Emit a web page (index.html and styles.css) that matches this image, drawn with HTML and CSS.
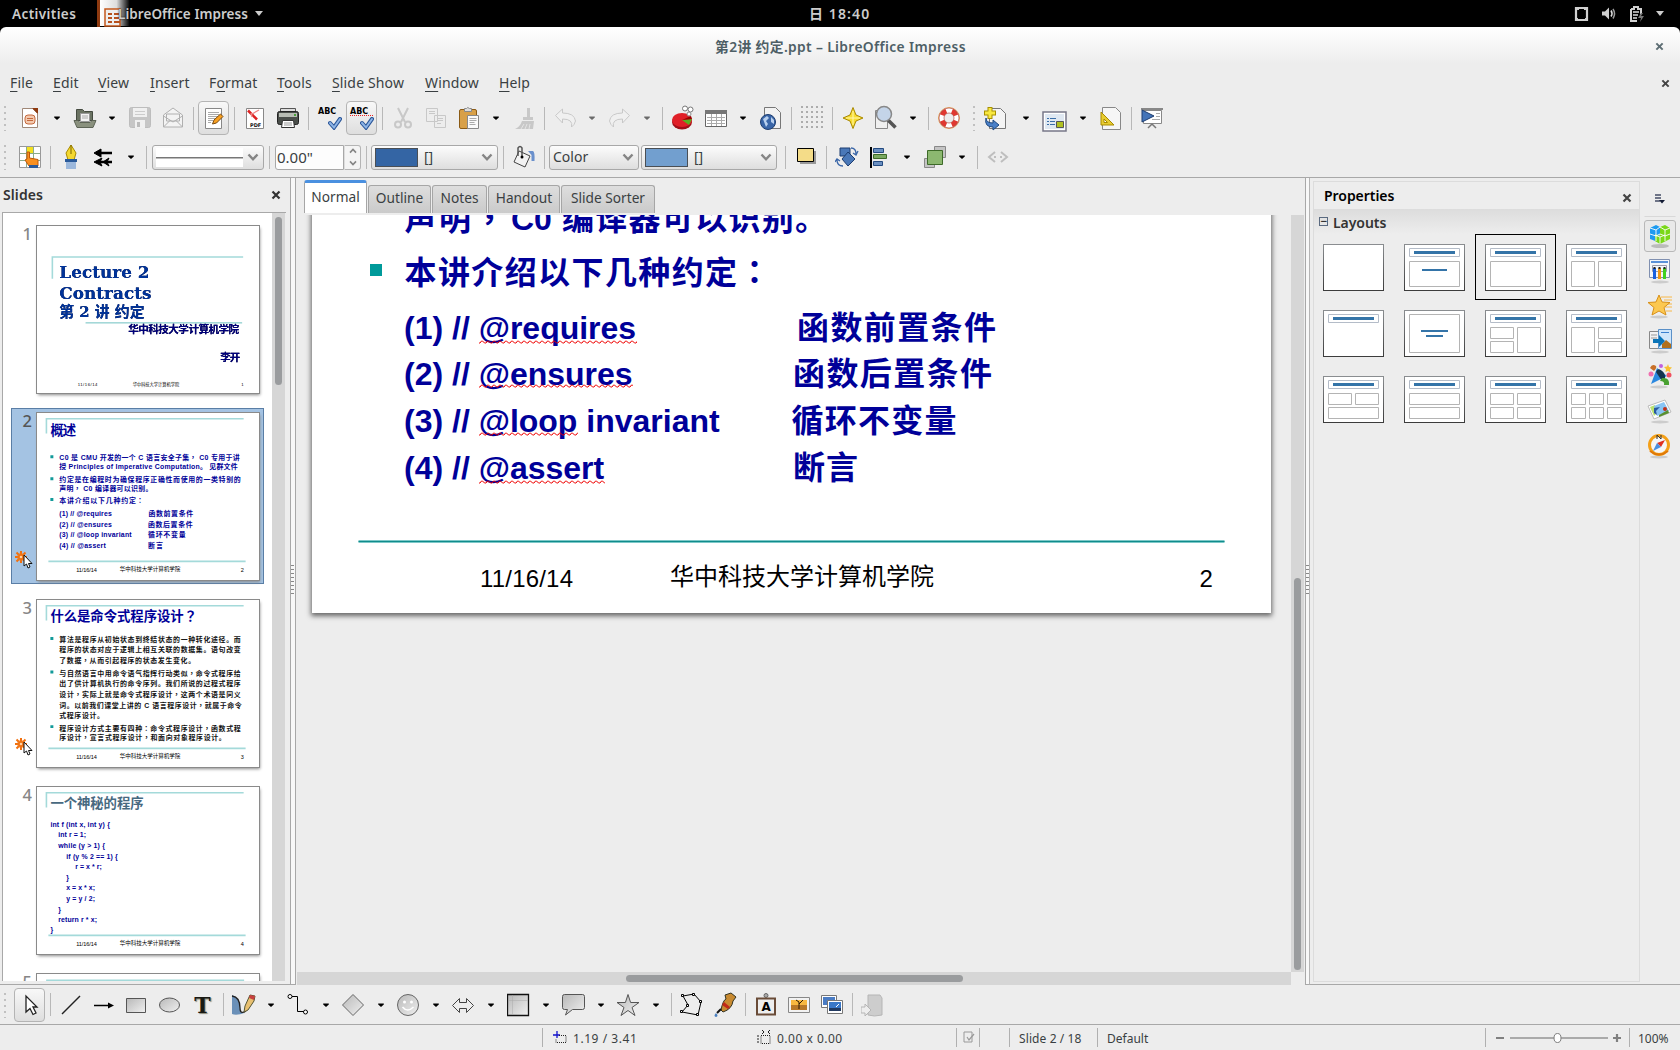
FILE: index.html
```html
<!DOCTYPE html>
<html>
<head>
<meta charset="utf-8">
<title>第2讲 约定.ppt – LibreOffice Impress</title>
<link rel="stylesheet" href="styles.css">
</head>
<body>
<svg class="defs" width="0" height="0">
  <defs>
    <linearGradient id="grey" x1="0" y1="0" x2="1" y2="1"><stop offset="0" stop-color="#b8b8b8"/><stop offset="1" stop-color="#f0f0f0"/></linearGradient>
    <linearGradient id="fade" x1="0" y1="0" x2="1" y2="0"><stop offset="0" stop-color="#fff"/><stop offset=".5" stop-color="#ddd"/><stop offset=".9" stop-color="#000"/></linearGradient>
    <linearGradient id="frame" x1="0" y1="0" x2="0" y2="1"><stop offset="0" stop-color="#8a8d90"/><stop offset="1" stop-color="#3c3c3c"/></linearGradient>
    <pattern id="squig" width="6" height="4" patternUnits="userSpaceOnUse"><path d="M0 3L1.500 1H2.500L4.500 3H6" fill="none" stroke="#e00" stroke-width="1"/></pattern>
    <symbol id="dd" viewBox="0 0 8 8"><path d="M1.200 2.500h5.600v1l-2.800 2.600-2.800-2.600z"/></symbol>
    <symbol id="x" viewBox="0 0 10 10"><path d="M1.500 1.500l7 7M8.500 1.500l-7 7" stroke="currentColor" stroke-width="2.200"/></symbol>
    <symbol id="chev" viewBox="0 0 12 12"><path d="M1.500 3.500L6 8.300l4.500-4.800" fill="none" stroke="#858585" stroke-width="2.400"/></symbol>
    <symbol id="anim" viewBox="0 0 18 18"><path d="M6 0v12M0 6h12M1.500 1.500l9 9M10.500 1.500l-9 9" stroke="#f07010" stroke-width="2"/><circle cx="6" cy="6" r="3.500" fill="none" stroke="#f07818" stroke-width=".8"/><circle cx="6" cy="6" r="1.300" fill="#ffd0a0"/><path d="M9 4v11l2.500-2 1.500 4 2-1-1.500-3.500H17z" fill="#fff" stroke="#111"/></symbol>
    <symbol id="check" viewBox="0 0 14 13"><path d="M2 6l4 4.500L12 2" fill="none" stroke="#2a5699" stroke-width="4" stroke-linecap="round"/><path d="M2 6l4 4.500L12 2" fill="none" stroke="#8db4e6" stroke-width="2" stroke-linecap="round"/></symbol>
  </defs>
</svg>

<header class="topbar">
  <span class="activities">Activities</span>
  <svg class="appicon" width="36" height="27"><path fill="#8e3a10" d="M0 0h3v27H0z"/><path fill="url(#fade)" d="M3 0h33v26H3z"/><path fill="#eee" stroke="#c4581c" stroke-width="1.500" d="M8 9h15v17H8z"/><path stroke="#b8511c" stroke-width="2" d="M11 14h4M17 14h6M11 18h4M17 18h6M11 22h4M17 22h6"/></svg>
  <span class="appname">LibreOffice Impress</span>
  <svg class="caret" width="8" height="6"><path fill="#ccc" d="M0 0h8L4 5z"/></svg>
  <span class="clock">日 18:40</span>
  <div class="tray">
    <svg width="15" height="16" fill="none"><path d="M2 2h11v12H2z" stroke="#d0d0d0" stroke-width="2.200"/><path d="M3 3h2v1H3zM10 3h2v1h-2zM3 12h1v1H3zM11 12h1v1h-1z" fill="#ccc"/></svg>
    <svg width="16" height="16" fill="none"><path d="M1 5.500h3L8 1.500v12l-4-4H1z" fill="#d0d0d0"/><path d="M10 4.500q2 3 0 6" stroke="#ddd" stroke-width="1.600"/><path d="M12 3q3 4.500 0 9.500" stroke="#999" stroke-width="1.500"/></svg>
    <svg width="15" height="18" fill="none"><path d="M2 4h3V2h4v2h3v5M2 4v12h6" stroke="#d0d0d0" stroke-width="2"/><path d="M4 7h6M4 10h5M4 13h4" stroke="#ddd" stroke-width="1.500"/><path d="M12 8l-3 5h3l-1 4 4-6h-3l2-3z" fill="#777"/></svg>
    <svg width="8" height="6"><path fill="#ccc" d="M0 0h8L4 5z"/></svg>
  </div>
</header>

<div class="window">
  <div class="titlebar"><span>第2讲 约定.ppt – LibreOffice Impress</span><svg class="close" width="9" height="9"><use href="#x"/></svg></div>
  <nav class="menubar">
    <span><u>F</u>ile</span><span><u>E</u>dit</span><span><u>V</u>iew</span><span><u>I</u>nsert</span><span>F<u>o</u>rmat</span><span><u>T</u>ools</span><span><u>S</u>lide Show</span><span><u>W</u>indow</span><span><u>H</u>elp</span>
    <svg class="docclose" width="9" height="9"><use href="#x"/></svg>
  </nav>

  <div class="toolbar standard">
    <i class="grip"></i>
    <b class="tb"><svg width="24" height="24"><path fill="#fff" stroke="#a08878" d="M4.500 2.500h10l5 5v14h-15z"/><path fill="#8e3a10" d="M14 2h6v6z"/><rect x="7" y="9" width="10" height="9" rx="3" fill="#f3c9ae" stroke="#c4683c"/><path stroke="#c4683c" d="M9 12.500h6M9 14.500h6"/></svg></b>
    <b class="dd"><svg><use href="#dd"/></svg></b>
    <b class="tb"><svg width="24" height="24"><path fill="#6b7363" stroke="#454b40" d="M3.500 3.500h6l2 2h8v9h-16z"/><path fill="#f2f2f2" stroke="#999" d="M7.500 7.500h9v8h-9z"/><path stroke="#aaa" d="M9 10h6M9 12h6"/><path fill="#8a917e" stroke="#5d6456" d="M1 14.500h4l2 2h10l2-2h4l-3 7H4z"/></svg></b>
    <b class="dd"><svg><use href="#dd"/></svg></b>
    <b class="tb"><svg width="24" height="24"><rect x="1.500" y="1.500" width="21" height="20" rx="2" fill="#c6c6c6" stroke="#bdbdbd"/><path fill="#f0f0f0" d="M5 2h14v9H5zM7 14h10v8H7z"/><path stroke="#ccc" d="M7 5.500h10M7 8.500h10"/><path fill="#bbb" d="M9 16h3v5H9z"/></svg></b>
    <b class="tb"><svg width="24" height="24" fill="#f3f3f3" stroke="#b0b0b0"><path d="M2.500 9L12 2l9.500 7v12h-19z"/><path d="M5.500 8h13v7h-13z"/><path d="M2.500 10l9.500 6 9.500-6M2.500 21l7-7M21.500 21l-7-7" fill="none"/></svg></b>
    <i class="sep"></i>
    <b class="tb on"><svg width="24" height="24"><path fill="#fff" stroke="#888" d="M3.500 2.500h16v20h-16z"/><path stroke="#aaa" d="M6 6.500h11M6 8.500h11M6 10.500h11M6 12.500h7M6 14.500h5M6 16.500h3"/><path d="M10.500 18l1.500-4 6.500-6 2.500 2.500L14.500 17z" fill="#f8a020" stroke="#7a4a10"/></svg></b>
    <i class="sep"></i>
    <b class="tb"><svg width="24" height="24"><path fill="#fff" stroke="#888" d="M3.500 2.500h17v20h-17z"/><path d="M5 4.500l9 9" stroke="#d22" stroke-width="2.500"/><path d="M9 8l7-4M8 7l1 4" stroke="#e88" stroke-width="1.300"/><text x="7" y="20.500" class="pdf">PDF</text></svg></b>
    <b class="tb"><svg width="24" height="24"><path fill="#ddd" stroke="#555" d="M4.500 2.500h15v6h-15z"/><rect x="1.500" y="5.500" width="21" height="13" rx="2" fill="#4a4e4a" stroke="#222"/><path fill="#b8bcb4" d="M3 7h18v4H3z"/><path fill="#fff" stroke="#333" d="M6.500 14.500h11l1 7h-13z"/><path fill="#48a038" d="M18 8h2v2h-2z"/><path stroke="#999" d="M8 17h8M8 19h8"/></svg></b>
    <i class="sep"></i>
    <b class="tb abc"><em>ABC</em><svg width="14" height="13"><use href="#check"/></svg></b>
    <b class="tb abc on"><em class="wave">ABC</em><svg width="14" height="13"><use href="#check"/></svg></b>
    <i class="sep"></i>
    <b class="tb dim"><svg width="24" height="24" fill="none" stroke="#aaa" stroke-width="2"><path d="M7 2l7 14M17 2L10 16"/><circle cx="7" cy="18.500" r="3"/><circle cx="17" cy="18.500" r="3"/></svg></b>
    <b class="tb dim"><svg width="24" height="24" fill="#eee" stroke="#aaa"><path d="M2.500 2.500h11v13h-11zM10.500 9.500h11v12h-11z"/><path d="M5 5.500h6M5 7.500h6M13 12.500h6M13 14.500h6M13 17.500h4"/></svg></b>
    <b class="tb"><svg width="24" height="24"><rect x="2.500" y="3.500" width="17" height="19" rx="1.500" fill="#d8a048" stroke="#8a5a14"/><path fill="#ddd" stroke="#888" d="M7.500 5.500v-3h2q1-2 3 0h2v3z"/><path fill="#fafafa" stroke="#888" d="M10.500 9.500h11v13h-11z"/><path stroke="#aaa" d="M12.500 12.500h7M12.500 14.500h7M12.500 16.500h5M12.500 18.500h6"/></svg></b>
    <b class="dd"><svg><use href="#dd"/></svg></b>
    <b class="tb dim"><svg width="24" height="24" fill="#aaa"><path d="M15 2h3v9h3v3H11v-3h4z"/><path d="M10 15h12l-1 8H3q5-2 7-8z"/><path d="M9 23l3-5M13 23l2-5M17 23l1-5" stroke="#ddd"/></svg></b>
    <i class="sep"></i>
    <b class="tb dim"><svg width="24" height="24" fill="#f4f4f4" stroke="#aaa"><path d="M2.500 9.500l7-6.500v4q12 0 13 8-1 4-4 6 2-8-9-8v4z"/></svg></b>
    <b class="dd dim"><svg><use href="#dd"/></svg></b>
    <b class="tb dim"><svg width="24" height="24" fill="#f4f4f4" stroke="#aaa"><path d="M21.500 9.500l-7-6.500v4q-12 0-13 8 1 4 4 6-2-8 9-8v4z"/></svg></b>
    <b class="dd dim"><svg><use href="#dd"/></svg></b>
    <i class="sep"></i>
    <b class="tb"><svg width="26" height="26" fill="none"><ellipse cx="12" cy="17" rx="10" ry="7.500" fill="#a01018"/><ellipse cx="12" cy="15" rx="10" ry="7" fill="#e02028"/><path d="M12 15l10-1-3 6z" fill="#58b020"/><path d="M12 15l9-4 1 3z" fill="#900"/><circle cx="15" cy="3.500" r="2.500" stroke="#777" fill="#fff"/><circle cx="20.500" cy="4.500" r="2.500" stroke="#777" fill="#fff"/><circle cx="19" cy="9" r="2" stroke="#888" fill="#fff"/></svg></b>
    <b class="tb"><svg width="24" height="24"><path fill="#fff" stroke="#666" d="M1.500 4.500h21v16h-21z"/><path fill="#777" d="M1 4h22v4H1z"/><path stroke="#aaa" d="M3 11.500h18M3 14.500h18M3 17.500h18M7.500 8v12M12.500 8v12M17.500 8v12"/></svg></b>
    <b class="dd"><svg><use href="#dd"/></svg></b>
    <b class="tb"><svg width="24" height="24"><path fill="#f2f2f2" stroke="#777" d="M5.500 1.500h11l5 5v16h-16z"/><circle cx="9" cy="16" r="7.500" fill="#3a66a8" stroke="#1d3d70"/><path fill="#b8d0ee" d="M4 13l4-3 2 2-3 3 2 3-2 3zM12 11l3 3v4l-3-2z"/></svg></b>
    <i class="sep"></i>
    <b class="tb"><i class="dots"></i></b>
    <i class="sep"></i>
    <b class="tb"><svg width="24" height="24"><path d="M12 1.500l3 7.500 7 3-7 3-3 7.500L9 15l-7-3 7-3z" fill="#f8dc30" stroke="#a88800"/><path d="M12 5v14M5 12h14" stroke="#fff8b0"/></svg></b>
    <b class="tb"><svg width="25" height="26"><path fill="#f0f0f0" stroke="#888" d="M2.500 5.500h12v18h-12z"/><path d="M15 15l7.500 7.500" stroke="#555" stroke-width="3.500"/><circle cx="11" cy="9" r="7.500" fill="#c4d4e8" stroke="#888" stroke-width="1.500"/></svg></b>
    <b class="dd"><svg><use href="#dd"/></svg></b>
    <i class="sep"></i>
    <b class="tb"><svg width="24" height="24" fill="none"><circle cx="12" cy="12" r="10.500" stroke="#e8a860"/><circle cx="12" cy="12" r="7.500" stroke="#fff" stroke-width="5"/><circle cx="12" cy="12" r="7.500" stroke="#e03830" stroke-width="5" stroke-dasharray="6 5.780" stroke-dashoffset="-2.800"/><circle cx="12" cy="12" r="10" stroke="#b05048" stroke-width=".7"/><circle cx="12" cy="12" r="5" stroke="#b05048" stroke-width=".7"/></svg></b>
    <i class="grip mid"></i>
    <b class="tb"><svg width="25" height="25"><path fill="#f4f4f4" stroke="#777" d="M6.500 2.500h11l5 5v15h-16z"/><path d="M7 1v12M1 7h12" stroke="#a89000" stroke-width="5"/><path d="M7 2v10M2 7h10" stroke="#f8e840" stroke-width="3"/><path d="M3 12q0 5 7 5v-3l6 5-6 5v-3Q1 21 3 12z" fill="#4a80c8" stroke="#204a80"/></svg></b>
    <b class="dd wide"><svg><use href="#dd"/></svg></b>
    <b class="tb wide"><svg class="low" width="25" height="24"><path fill="#fff" stroke="#778" stroke-width="1.500" d="M1 3h23v19H1z"/><path fill="#dfe8f2" d="M3 5h19v15H3z"/><path d="M5 9.500h2M8 9.500h6M5 12.500h2M8 12.500h5M5 15.500h2M8 15.500h5" stroke="#3a6ea8"/><path fill="#b0c020" stroke="#555" d="M14.500 12.500h7v6h-7z"/></svg></b>
    <b class="dd"><svg><use href="#dd"/></svg></b>
    <b class="tb"><svg width="24" height="25"><path fill="#f6f6f6" stroke="#888" d="M3.500 1.500h13l5 5v17h-18z"/><path d="M2 6v13h13z" fill="#e8cc30" stroke="#a88a00"/><path d="M5 13v3.500h3.500z" fill="#fff" stroke="#a88a00"/></svg></b>
    <i class="sep"></i>
    <b class="tb"><svg width="24" height="24"><path fill="#fff" stroke="#888" d="M3.500 4.500h18v13h-18z"/><path fill="#888" d="M1 2h22v2H1z"/><path d="M2 4v12l12-6z" fill="#4474b8" stroke="#1d3d70"/><path stroke="#aaa" d="M16 7.500h4M16 10.500h4M12 13.500h8"/><path d="M12 18l-4 4M12 18l4 4" stroke="#777" stroke-width="1.500"/></svg></b>
  </div>

  <div class="toolbar drawline">
    <i class="grip"></i>
    <b class="tb"><svg width="24" height="24"><path fill="#fff" stroke="#999" d="M1.500 1.500h21v21h-21z"/><path fill="#f4e020" d="M9 2h7v7H9z"/><path stroke="#8aaa8a" d="M8.500 2v20M15.500 2v20M2 8.500h20M2 15.500h20"/><path d="M9 7h2.500v6L20 14.500V21H11l-4-6 2-1z" fill="#f89020" stroke="#c05808"/><path fill="#2a5a9a" d="M11 20h9v3h-9z"/></svg></b>
    <i class="sep"></i>
    <b class="tb"><svg width="24" height="26"><path d="M12 1l5 8-2 7H9L7 9z" fill="#f4d830" stroke="#a88a00"/><path d="M12 1v9" stroke="#7a6400"/><path fill="#2a5a9a" d="M6 15h12v3H6z"/><path fill="#9cb8dc" d="M7 18h10v7H7z"/></svg></b>
    <b class="tb arrows"><svg width="24" height="24" stroke="#000" stroke-width="2.500"><path d="M5 8h16M7 17h14"/><path d="M3 8l7-4v8zM3 17l8-4-2 4 2 4zM12 17l6-4-2 4 2 4z" stroke-width="1"/></svg></b>
    <b class="dd"><svg><use href="#dd"/></svg></b>
    <i class="sep"></i>
    <div class="combo c1"><i class="linebox"></i><svg class="chev"><use href="#chev"/></svg></div>
    <i class="sep"></i>
    <div class="spin"><span>0.00"</span></div><div class="spinbtn"><svg class="up"><use href="#chev"/></svg><svg><use href="#chev"/></svg></div>
    <i class="sep"></i>
    <div class="combo c2"><i class="sw blue"></i><span class="br">[]</span><svg class="chev"><use href="#chev"/></svg></div>
    <i class="sep"></i>
    <b class="tb"><svg width="24" height="24"><path d="M7 6l11 5-5 11-11-5z" fill="#f2f2f2" stroke="#444"/><path d="M6 11V3q2-3 4 0v9" fill="none" stroke="#555" stroke-width="1.500"/><circle cx="10" cy="12" r="1.500"/><path d="M16 6h5q2 1 1.500 10h-3V10z" fill="#6a90cc"/></svg></b>
    <i class="sep"></i>
    <div class="combo c3"><span>Color</span><svg class="chev"><use href="#chev"/></svg></div>
    <div class="combo c4"><i class="sw light"></i><span class="br">[]</span><svg class="chev"><use href="#chev"/></svg></div>
    <i class="sep s2"></i>
    <b class="tb"><svg width="24" height="24"><path fill="#999" d="M6 6h16v13H6z"/><path fill="#f4dc88" stroke="#000" d="M3.500 3.500h16v13h-16z"/></svg></b>
    <i class="sep"></i>
    <b class="tb"><svg width="24" height="24"><path fill="#4a78b8" stroke="#1d3d70" d="M5 3h10v8H5z"/><path fill="#4a78b8" stroke="#1d3d70" d="M13 7l7 7-7 7-6-7z"/><path d="M16 3q5 0 5 6M18 8l3 2 2-4M8 21q-6 0-6-6M0 17l2-3 3 2" fill="none" stroke="#3a66a8" stroke-width="1.300"/></svg></b>
    <b class="tb"><svg width="24" height="24"><path d="M3 2v21" stroke="#000" stroke-width="2"/><path fill="#6a8fc0" stroke="#234a80" d="M5.500 3.500h10v4h-10zM5.500 16.500h9v4h-9z"/><path fill="#7aa860" stroke="#3d6a28" d="M5.500 9.500h13v4h-13z"/></svg></b>
    <b class="dd"><svg><use href="#dd"/></svg></b>
    <b class="tb"><svg width="24" height="24"><path fill="#c4c4c4" stroke="#888" d="M11.500 1.500h11v11h-11zM1.500 13.500h10v9h-10z"/><path fill="#8cb870" stroke="#3d6a28" d="M4.500 5.500h15v14h-15z"/></svg></b>
    <b class="dd"><svg><use href="#dd"/></svg></b>
    <i class="sep"></i>
    <b class="tb dim"><svg width="24" height="24" fill="none" stroke="#999" stroke-width="2"><path d="M9 7l-6 5 6 5M15 7l6 5-6 5M8 12h2M14 12h2"/></svg></b>
  </div>

  <main class="work">
    <section class="slides">
      <h2>Slides<svg width="10" height="10"><use href="#x"/></svg></h2>
      <div class="listwrap">
        <div class="list">
          <article><span class="num">1</span>
            <svg class="thumb" viewBox="0 0 224 168"><path class="tl" d="M15.500 53V31H208"/><path class="tl thin" d="M49 97.500H207"/>
              <g class="cover"><text x="22.500" y="52" textLength="91" font-size="17">Lecture 2</text><text x="22.500" y="73" textLength="93" font-size="17">Contracts</text><text x="22.500" y="92" textLength="86" font-size="15">第 2 讲 约定</text></g>
              <g class="cover cjk"><text x="92" y="108" textLength="112" font-size="10.700">华中科技大学计算机学院</text><text x="185" y="136" textLength="20" font-size="10.500">李开</text></g>
              <g class="ft tiny"><text x="41" y="161" textLength="20">11/16/14</text><text x="96.500" y="161" textLength="47">华中科技大学计算机学院</text><text x="206" y="161">1</text></g></svg></article>
          <article class="sel"><span class="num">2</span><svg class="star" width="18" height="18"><use href="#anim"/></svg>
            <svg class="thumb" viewBox="0.500 0.500 224 168"><path class="tl" d="M10 21V6H209M12 150H211"/>
              <text class="tt" x="14" y="22" textLength="26">概述</text>
              <path class="bl" d="M14 43h3v3h-3zM14 65h3v3h-3zM14 86h3v3h-3z"/>
              <g class="bd navy"><text x="23" y="48" textLength="182">C0 是 CMU 开发的一个 C 语言安全子集<tspan class="mid">，</tspan> C0 专用于讲</text><text x="23" y="57" textLength="180">授 Principles of Imperative Computation。 见群文件</text><text x="23" y="70" textLength="183">约定是在编程时为确保程序正确性而使用的一类特别的</text><text x="23" y="79" textLength="94">声明<tspan class="mid">，</tspan> C0 编译器可以识别。</text><text x="23" y="91" textLength="85">本讲介绍以下几种约定<tspan class="mid">：</tspan></text>
              <text x="23" y="104" textLength="53">(1) // @requires</text><text x="113" y="104" textLength="45">函数前置条件</text><text x="23" y="115" textLength="53">(2) // @ensures</text><text x="112.500" y="115" textLength="45">函数后置条件</text><text x="23" y="125" textLength="73">(3) // @loop invariant</text><text x="112.500" y="125" textLength="38">循环不变量</text><text x="23" y="136" textLength="47">(4) // @assert</text><text x="112.500" y="136" textLength="15">断言</text></g>
              <g class="ft"><text x="40" y="160.500" textLength="21">11/16/14</text><text x="84" y="159.500" textLength="61">华中科技大学计算机学院</text><text x="206" y="160.500">2</text></g></svg></article>
          <article><span class="num">3</span><svg class="star" width="18" height="18"><use href="#anim"/></svg>
            <svg class="thumb" viewBox="0.500 0.500 224 168"><path class="tl" d="M10 21V6H209M12 150H211"/>
              <text class="tt" x="14" y="21.500" textLength="148">什么是命令式程序设计<tspan class="mid">？</tspan></text>
              <path class="bl" d="M14 37.500h3v3h-3zM14 71.500h3v3h-3zM14 126.500h3v3h-3z"/>
              <g class="bd"><text x="23" y="43" textLength="183">算法是程序从初始状态到终结状态的一种转化途径。而</text><text x="23" y="53" textLength="183">程序的状态对应于逻辑上相互关联的数据集。语句改变</text><text x="23" y="64" textLength="137">了数据<tspan class="mid">，</tspan>从而引起程序的状态发生变化。</text><text x="23" y="77" textLength="183">与自然语言中用命令语气指挥行动类似<tspan class="mid">，</tspan>命令式程序给</text><text x="23" y="87" textLength="183">出了供计算机执行的命令序列。我们所说的过程式程序</text><text x="23" y="98" textLength="183">设计<tspan class="mid">，</tspan>实际上就是命令式程序设计<tspan class="mid">，</tspan>这两个术语是同义</text><text x="23" y="109" textLength="184">词。以前我们课堂上讲的 C 语言程序设计<tspan class="mid">，</tspan>就属于命令</text><text x="23" y="119" textLength="45">式程序设计。</text><text x="23" y="132" textLength="183">程序设计方式主要有四种<tspan class="mid">：</tspan>命令式程序设计<tspan class="mid">，</tspan>函数式程</text><text x="23" y="142" textLength="168">序设计<tspan class="mid">，</tspan>宣言式程序设计<tspan class="mid">，</tspan>和面向对象程序设计。</text></g>
              <g class="ft"><text x="40" y="160.500" textLength="21">11/16/14</text><text x="84" y="159.500" textLength="61">华中科技大学计算机学院</text><text x="206" y="160.500">3</text></g></svg></article>
          <article><span class="num">4</span>
            <svg class="thumb" viewBox="0.500 0.500 224 168"><path class="tl" d="M10 21V6H209M12 150H211"/>
              <text class="tt slate" x="14" y="21.500" textLength="94">一个神秘的程序</text>
              <g class="bd navy"><text x="14" y="41" textLength="60">int f (int x, int y) {</text><text x="22" y="51" textLength="28">int r = 1;</text><text x="22" y="61.500" textLength="47">while (y &gt; 1) {</text><text x="30" y="72.500" textLength="52">if (y % 2 == 1) {</text><text x="39" y="82.500" textLength="27">r = x * r;</text><text x="30" y="94">}</text><text x="30" y="104" textLength="29">x = x * x;</text><text x="30" y="115" textLength="29">y = y / 2;</text><text x="22" y="126">}</text><text x="22" y="136" textLength="39">return r * x;</text><text x="14" y="147">}</text></g>
              <g class="ft"><text x="40" y="160.500" textLength="21">11/16/14</text><text x="84" y="159.500" textLength="61">华中科技大学计算机学院</text><text x="206" y="160.500">4</text></g></svg></article>
          <article><span class="num">5</span><svg class="thumb" viewBox="0 0 224 168"><path class="tl" d="M10 21V6H209"/></svg></article>
        </div>
        <div class="vs"><i class="th1"></i></div>
      </div>
    </section>
    <div class="split"><i></i></div>

    <section class="editor">
      <div class="tabs"><span class="active">Normal</span><span>Outline</span><span>Notes</span><span>Handout</span><span>Slide Sorter</span></div>
      <div class="viewrow">
        <div class="canvas">
          <svg class="page" width="959" height="720" viewBox="312 -107 959 720">
            <g class="big"><text x="404.500" y="230" textLength="101">声明<tspan class="mid">，</tspan></text><text x="511" y="230">C0</text><text x="562" y="230" textLength="265">编译器可以识别。</text>
            <text x="404.500" y="284" textLength="366">本讲介绍以下几种约定<tspan class="mid">：</tspan></text>
            <text x="404" y="339">(1) // @requires</text><text x="797" y="338.500" textLength="199">函数前置条件</text>
            <text x="404" y="385">(2) // @ensures</text><text x="793" y="384.500" textLength="199">函数后置条件</text>
            <text x="404" y="432">(3) // @loop invariant</text><text x="791.500" y="431.500" textLength="165">循环不变量</text>
            <text x="404" y="479">(4) // @assert</text><text x="793" y="478.500" textLength="65">断言</text></g>
            <path fill="#009a9a" d="M370 264h12v12h-12z"/>
            <g fill="url(#squig)"><path d="M479 340h158v4H479zM479 384h154v4H479zM479 432h99v4H479zM479 480h126v4H479z"/></g>
            <path d="M358.500 541.500H1224.500" stroke="#7cc8c8" stroke-width="3"/><path d="M358.500 541.500H1224.500" stroke="#108c8c"/>
            <g class="foot"><text x="480" y="587" textLength="93">11/16/14</text><text x="670" y="585" textLength="264">华中科技大学计算机学院</text><text x="1199.500" y="587">2</text></g>
          </svg>
        </div>
        <div class="vs"><i class="th2"></i></div>
      </div>
      <div class="hs"><i></i></div>
    </section>
    <div class="split r"><i></i></div>

    <aside class="sidebar">
      <div class="deck">
        <h3>Properties<svg width="10" height="10"><use href="#x"/></svg></h3>
        <h4><i>−</i>Layouts</h4>
        <div class="layouts">
          <b><svg viewBox="0 0 61 47"><rect class="f"/></svg></b>
          <b><svg viewBox="0 0 61 47"><rect class="f"/><path class="t" d="M5.500 4.500h50v8h-50z"/><path class="k" d="M10 8.500h41"/><path class="o" d="M5.500 17.500h50v25h-50z"/><path class="n" d="M18 26h25"/></svg></b>
          <b class="cur"><svg viewBox="0 0 61 47"><rect class="f"/><path class="t" d="M5.500 4.500h50v8h-50z"/><path class="k" d="M10 8.500h41"/><path class="o" d="M5.500 17.500h50v25h-50z"/></svg></b>
          <b><svg viewBox="0 0 61 47"><rect class="f"/><path class="t" d="M5.500 4.500h50v8h-50z"/><path class="k" d="M10 8.500h41"/><path class="o" d="M5.500 17.500h23v25h-23zM32.500 17.500h23v25h-23z"/></svg></b>
          <b><svg viewBox="0 0 61 47"><rect class="f"/><path class="t" d="M5.500 4.500h50v8h-50z"/><path class="k" d="M10 8.500h41"/></svg></b>
          <b><svg viewBox="0 0 61 47"><rect class="f"/><path class="o" d="M5.500 4.500h50v38h-50z"/><path class="n" d="M17 21h27M22 26h17"/></svg></b>
          <b><svg viewBox="0 0 61 47"><rect class="f"/><path class="t" d="M5.500 4.500h50v8h-50z"/><path class="k" d="M10 8.500h41"/><path class="o" d="M5.500 17.500h23v11h-23zM5.500 31.500h23v11h-23zM32.500 17.500h23v25h-23z"/></svg></b>
          <b><svg viewBox="0 0 61 47"><rect class="f"/><path class="t" d="M5.500 4.500h50v8h-50z"/><path class="k" d="M10 8.500h41"/><path class="o" d="M5.500 17.500h23v25h-23zM32.500 17.500h23v11h-23zM32.500 31.500h23v11h-23z"/></svg></b>
          <b><svg viewBox="0 0 61 47"><rect class="f"/><path class="t" d="M5.500 4.500h50v8h-50z"/><path class="k" d="M10 8.500h41"/><path class="o" d="M5.500 17.500h23v11h-23zM32.500 17.500h23v11h-23zM5.500 31.500h50v11h-50z"/></svg></b>
          <b><svg viewBox="0 0 61 47"><rect class="f"/><path class="t" d="M5.500 4.500h50v8h-50z"/><path class="k" d="M10 8.500h41"/><path class="o" d="M5.500 17.500h50v11h-50zM5.500 31.500h50v11h-50z"/></svg></b>
          <b><svg viewBox="0 0 61 47"><rect class="f"/><path class="t" d="M5.500 4.500h50v8h-50z"/><path class="k" d="M10 8.500h41"/><path class="o" d="M5.500 17.500h23v11h-23zM32.500 17.500h23v11h-23zM5.500 31.500h23v11h-23zM32.500 31.500h23v11h-23z"/></svg></b>
          <b><svg viewBox="0 0 61 47"><rect class="f"/><path class="t" d="M5.500 4.500h50v8h-50z"/><path class="k" d="M10 8.500h41"/><path class="o" d="M5.500 17.500h14v11h-14zM23.500 17.500h14v11h-14zM41.500 17.500h14v11h-14zM5.500 31.500h14v11h-14zM23.500 31.500h14v11h-14zM41.500 31.500h14v11h-14z"/></svg></b>
        </div>
      </div>
      <div class="deckbar">
        <b class="cfg"><svg width="12" height="12"><path d="M1 2h6M1 5h6M1 8h5" stroke="#444c66" stroke-width="1.300"/><path d="M5 7h6L8 10.500z" fill="#111a33"/></svg></b>
        <b class="on"><svg width="24" height="26"><ellipse cx="12" cy="23" rx="9" ry="2" fill="#bbb"/><path fill="#1d9bf0" d="M2 5l6-3 4 2v7l-2 8-8-3z"/><path fill="#7ad818" d="M12 4l5-2 5 3v11l-10 5-5-3v-7l5 2z"/><path d="M2 5l6 2 4-3M8 7v11M2 11l6 2 4-2M12 4l5 3 5-2M17 7v11M12 11l5 2 5-2M7 12l5 2 5-2M12 14v7" fill="none" stroke="#fff" stroke-width=".9"/></svg></b>
        <b><svg width="24" height="26"><ellipse cx="12" cy="24" rx="9" ry="1.500" fill="#ccc"/><path fill="#f4f6fa" stroke="#8090b0" d="M1.500 1.500h20v18h-20z"/><path fill="#5a90d8" d="M3 3h17v2H3z"/><path stroke="#99a" fill="none" d="M4.500 7.500h14v6h-14z"/><path fill="#1860e0" d="M5 10h3v11H5z"/><path fill="#f09818" d="M10 10h3v11h-3z"/><path fill="#40d020" d="M15 10h3v11h-3z"/><path stroke="#222" stroke-width="2" d="M6.500 9v2M11.500 9v2M16.500 9v2"/></svg></b>
        <b><svg width="26" height="26"><ellipse cx="12" cy="24" rx="9" ry="1.500" fill="#ccc"/><path d="M14 4h11M17 7h8M19 11h6M18 14h7M19 18h6" stroke="#f8b848"/><path d="M12 2l3 7 8 .5-6 5 2 7.500-7-4-7 4 2-7.500-6-5L9 9z" fill="#fcc850" stroke="#d89018"/></svg></b>
        <b><svg width="25" height="26"><ellipse cx="12" cy="24" rx="9" ry="1.500" fill="#ccc"/><path fill="#f2f2f2" stroke="#888" d="M1.500 3.500h9v17h-9z"/><path stroke="#999" d="M3 7h6M3 10h6"/><path fill="#cfe6fb" stroke="#5a90c8" d="M10.500 1.500h13v19h-13z"/><path stroke="#3a80d0" d="M13 4.500h8"/><path fill="#b0701c" d="M14 16l4-4 5 4v4h-9z"/><path d="M5 11h6V7l6 6-6 6v-4H5z" fill="#0a74b8"/></svg></b>
        <b><svg width="26" height="26"><ellipse cx="12" cy="24" rx="9" ry="1.500" fill="#ccc"/><path d="M4 21L10 5l10 8z" fill="#2a88e0"/><path d="M9 9q2-6 8 1 3 6-2 8z" fill="#14344c"/><path d="M3 5q2-5 6-2 1 2-2 5z" fill="#c87028"/><path d="M15 15q8-1 7 7h-5q1-4-4-4z" fill="#48a030"/><circle cx="14" cy="3" r="2" fill="#c060e0"/><circle cx="4" cy="11" r="2.500" fill="#f070b0"/><circle cx="22" cy="12" r="2.500" fill="#f05060"/><path d="M21 1l1 3 3 .5-2 2 .5 3-2.500-1.500L18.500 9 19 6l-2-2 3-.5z" fill="#f8c030"/></svg></b>
        <b><svg width="26" height="26"><ellipse cx="13" cy="24" rx="9" ry="1.500" fill="#ccc"/><path fill="#fff" stroke="#bbb" d="M1 8L18 2l6 12-17 7z"/><path fill="#b8e070" d="M3 9l5-2 2 8-3 3z"/><path fill="#88c4f4" d="M7 8l10-4 5 9-12 5z"/><path fill="#2858a0" d="M7 10l6-1-4 4 1 4-3-2z"/><path fill="#5a9030" d="M12 17l9-5 1 3-10 4z"/><circle cx="18" cy="11" r="2" fill="#c03018"/></svg></b>
        <b><svg width="26" height="26"><ellipse cx="12" cy="24" rx="9" ry="1.500" fill="#ccc"/><circle cx="12" cy="12" r="9.500" fill="#f6f6f6" stroke="#f4a018" stroke-width="3"/><path d="M3 18q9 7 18 0" fill="none" stroke="#e07808" stroke-width="2"/><path d="M18 7l-4 7-4-4z" fill="#e03020"/><path d="M6 18l4-8 4 4z" fill="#4a90e0"/><path d="M10 6V2l4 4V2" fill="none" stroke="#333"/></svg></b>
      </div>
    </aside>
  </main>

  <div class="toolbar drawing">
    <i class="grip"></i>
    <b class="tb on"><svg width="24" height="24"><path d="M8 3v16l4-3.500 3 6 3-1.500-3-6h4z" fill="#fff" stroke="#222" stroke-width="1.300"/></svg></b>
    <i class="sep"></i>
    <b class="tb"><svg width="24" height="24"><path d="M3 21L21 3" stroke="#222" stroke-width="1.400"/></svg></b>
    <b class="tb"><svg width="24" height="24"><path d="M2 12.500h15" stroke="#000" stroke-width="1.500"/><path d="M16 9.500l6 3-6 3z"/></svg></b>
    <b class="tb"><svg width="24" height="24"><path fill="url(#grey)" stroke="#555" d="M1.500 5.500h19v14h-19z"/></svg></b>
    <b class="tb"><svg width="24" height="24"><ellipse cx="11.500" cy="12" rx="10" ry="7" fill="url(#grey)" stroke="#555"/></svg></b>
    <b class="tb bigt">T</b>
    <i class="sep"></i>
    <b class="tb"><svg width="26" height="26"><path d="M1 3q8 2 8 14 0 5 5 4-9 3-13 1z" fill="#6a90b8"/><path d="M1 4q8 1 8 12 0 7 6 3" fill="none" stroke="#222" stroke-width="1.300"/><path d="M13 20l1-6 5-11 5 1-1 5-6 9z" fill="#e8c070" stroke="#553"/><path d="M19 3l5 1-1 4-5-2z" fill="#c84040"/></svg></b>
    <b class="dd"><svg><use href="#dd"/></svg></b>
    <b class="tb"><svg width="24" height="24" fill="#fff" stroke="#000"><path d="M5 3.500h5.500v15H17" fill="none"/><circle cx="3" cy="3.500" r="2"/><circle cx="18.500" cy="19" r="2"/></svg></b>
    <b class="dd"><svg><use href="#dd"/></svg></b>
    <b class="tb"><svg width="24" height="24"><path d="M11 1.500L21.500 12 11 22.500.500 12z" fill="url(#grey)" stroke="#666"/></svg></b>
    <b class="dd"><svg><use href="#dd"/></svg></b>
    <b class="tb"><svg width="24" height="24"><circle cx="11" cy="12" r="10.500" fill="url(#grey)" stroke="#666"/><circle cx="7.500" cy="9" r="1.500" fill="#fff"/><circle cx="14.500" cy="9" r="1.500" fill="#fff"/><path d="M5.500 14q5 6 11 0" fill="none" stroke="#fff" stroke-width="1.500"/></svg></b>
    <b class="dd"><svg><use href="#dd"/></svg></b>
    <b class="tb"><svg width="24" height="24"><path d="M.500 12.500l7-7v4h7v-4l7 7-7 7v-4h-7v4z" fill="#eee" stroke="#444"/></svg></b>
    <b class="dd"><svg><use href="#dd"/></svg></b>
    <b class="tb"><svg width="24" height="24"><path d="M.500 1.500h21v21h-21z" fill="url(#grey)" stroke="#111" stroke-width="1.300"/><path d="M5.500 2v20M1 7.500h20" stroke="#aaa" stroke-width=".5"/></svg></b>
    <b class="dd"><svg><use href="#dd"/></svg></b>
    <b class="tb"><svg width="24" height="24"><path d="M2.500 1.500h18q2 0 2 2v11q0 2-2 2H10.500l-7 5.500 2-5.500h-3q-2 0-2-2v-11q0-2 2-2z" fill="url(#grey)" stroke="#555"/></svg></b>
    <b class="dd"><svg><use href="#dd"/></svg></b>
    <b class="tb"><svg width="24" height="24"><path d="M11 1.500l2.600 8H22l-7 5 3 8-7-5-7 5 3-8-7-5h8.400z" fill="url(#grey)" stroke="#555"/></svg></b>
    <b class="dd"><svg><use href="#dd"/></svg></b>
    <i class="sep"></i>
    <b class="tb"><svg width="24" height="26"><path d="M3 4l11-2 7 8-3 13-16-3 6-7z" fill="none" stroke="#000"/><path d="M1.500 2.500h2v2h-2zM12.500 1.500h2v2h-2zM19.500 8.500h2v2h-2zM16.500 21.500h2v2h-2zM.5 18.500h2v2h-2zM6.500 12.500h2v2h-2z" fill="#fff" stroke="#000"/></svg></b>
    <b class="tb"><svg width="26" height="26"><path d="M13 3l6-2 5 4-3 4q-1 8-10 11l-2-2Q11 8 14 7z" fill="#c88a30" stroke="#332"/><path d="M12 10l6 5-2 2-6-4z" fill="#c02818"/><path d="M9 17l-4 4" stroke="#111" stroke-width="2"/><path d="M4 21q3 3 0 4-3-1 0-4z" fill="#4a80c0"/></svg></b>
    <i class="sep"></i>
    <b class="tb frameA"><svg width="24" height="26"><circle cx="12" cy="3.500" r="2" fill="#aaa" stroke="#666"/><path d="M3 6.500h18v16H3z" fill="#eee" stroke="#6a4c38" stroke-width="2"/><text x="7.500" y="19">A</text></svg></b>
    <b class="tb"><svg width="24" height="24"><path d="M1.500 4.500h21v15h-21z" fill="#f2f2f2" stroke="#888"/><path d="M4 7h16v5H4z" fill="#f8b840"/><path d="M4 12h16v5H4z" fill="#b87828"/><path d="M12 16V9l-3-2M12 11l4-4" stroke="#2a1804" fill="none"/></svg></b>
    <b class="tb"><svg width="24" height="24"><path d="M1.500 2.500h15v12h-15z" fill="#fff" stroke="#777"/><path d="M3 4h12v8H3z" fill="#4a7cc4"/><path d="M7.500 7.500h15v13h-15z" fill="#fff" stroke="#777"/><path d="M9 9h12v8H9z" fill="#3a78c8"/><path d="M9 15h12v3H9z" fill="#223a60"/><path d="M16 14l3-3" stroke="#fff"/></svg></b>
    <i class="sep"></i>
    <b class="tb dim"><svg width="24" height="26"><path d="M7 3h12l2 3v17q-8 2-14 0V3z" fill="#b4b4b4" stroke="#888"/><path d="M0 15h4v-3l6 6-6 6v-3H0z" fill="#eee" stroke="#888"/></svg></b>
  </div>

  <footer class="status">
    <div class="pos"><svg width="14" height="12"><path d="M4 0v7M0 4h7" stroke="#11c" stroke-width="1.300"/><path d="M6 4.500h7v7H3V8" fill="none" stroke="#222" stroke-dasharray="1 1"/></svg><span>1.19 / 3.41</span></div>
    <div class="size"><svg width="14" height="14"><path d="M4 5.500h9v8H4z" fill="none" stroke="#222" stroke-dasharray="1 1"/><path d="M5 0l2 2-2 2M13 0l-2 2 2 2" fill="none" stroke="#222"/><path d="M1 5v8" stroke="#222" stroke-dasharray="2 1"/></svg><span>0.00 x 0.00</span></div>
    <div class="mod"><svg width="12" height="13"><path d="M1 1h8v10H1z" fill="none" stroke="#999"/><path d="M4 6l2 3 5-6" fill="none" stroke="#999" stroke-width="1.200"/></svg></div>
    <div class="gap"></div>
    <div class="cnt"><span>Slide 2 / 18</span></div>
    <div class="tpl"><span>Default</span></div>
    <div class="zoom"><svg width="128" height="14"><path d="M0 7h8M117 7h8M121 3v8" stroke="#808080" stroke-width="2.200"/><path d="M14 7h98" stroke="#aaa" stroke-width="2"/><ellipse cx="61.500" cy="7" rx="3.500" ry="4.500" fill="#fff" stroke="#808080"/></svg></div>
    <div class="pct"><span>100%</span></div>
  </footer>
</div>
</body>
</html>
```
FILE: styles.css
```css
* { box-sizing: border-box; }
body { margin: 0; width: 1680px; height: 1050px; overflow: hidden; background: #000; color: #3a3f42; font: 14px/18px "Noto Sans", "Noto Sans CJK SC", sans-serif; }
svg { display: block; flex: none; }
i, em, b { font-style: normal; }
.defs { position: absolute; }

.topbar { height: 27px; display: flex; align-items: center; position: relative; color: #ccc; font-weight: 600; font-size: 13.500px; }
.activities { width: 97px; padding-left: 12px; letter-spacing: .4px; }
.appicon { margin-right: -15px; }
.appname { width: 137px; position: relative; white-space: nowrap; letter-spacing: .05px; text-shadow: 0 0 2px #000; }
.clock { position: absolute; left: 809px; white-space: nowrap; font-size: 14px; letter-spacing: 1.100px; }
.tray { margin-left: auto; padding-right: 16px; display: flex; align-items: center; gap: 12px; }

.window { height: 1023px; display: flex; flex-direction: column; background: linear-gradient(#fff, #ededed 36px); border-radius: 6px 6px 0 0; overflow: hidden; }
.titlebar { height: 39px; position: relative; text-align: center; line-height: 40px; font-weight: 600; font-size: 13.800px; color: #4e5f66; padding-left: 1px; letter-spacing: .36px; }
.close { position: absolute; right: 16px; top: 15px; color: #5e6e74; }
.menubar { height: 34px; padding-left: 10px; display: grid; grid-template-columns: 43px 45px 52px 59px 68px 55px 93px 74px 1fr 12px; align-items: center; padding-right: 7px; white-space: nowrap; letter-spacing: .15px; }
.menubar u { text-underline-offset: 3px; text-decoration-thickness: 1px; }
.docclose { color: #444; }

.toolbar { display: flex; align-items: center; flex: none; }
.standard { height: 36px; }
.drawline { height: 41px; padding-top: 1px; }
.drawing { height: 39px; }
.grip { flex: none; width: 13px; height: 26px; background: radial-gradient(circle at 1px 1px, #c0c0c0 1px, transparent 1.500px) 4px 1px / 20px 6px repeat-y; }
.grip.mid { width: 14px; background-position-x: 8px; }
.tb { width: 33px; height: 34px; flex: none; display: flex; align-items: center; justify-content: center; border: 1px solid transparent; }
.tb.on { width: 31px; margin: 0 1px; border: 1px solid #b4b4b4; border-radius: 4px; background: linear-gradient(#f8f8f8, #dedede); }
.tb.wide { width: 35px; }
.low { margin-top: 5px; }
.dim { opacity: .55; }
.arrows { padding-right: 2px; }
.dd { width: 22px; flex: none; display: flex; justify-content: center; }
.dd svg { width: 8px; height: 8px; }
.dd.wide { width: 25px; padding-left: 3px; }
.sep { width: 8px; height: 23px; flex: none; background: linear-gradient(#b8b8b8, #b8b8b8) 4px 0 / 1px 100% no-repeat; }
.s2 { width: 12px; background-position-x: 8px; }
.pdf { font: bold 5px "DejaVu Sans", sans-serif; fill: #111; }
.abc { flex-direction: column; align-items: flex-end; justify-content: flex-start; padding: 5px 2px 0 0; }
.abc em { font: bold 8px/9px "DejaVu Sans", sans-serif; color: #000; width: 24px; padding-bottom: 1px; }
.wave { background: linear-gradient(90deg, #e22 50%, transparent 50%) 0 8px / 2px 1px repeat-x; }
.dots { width: 22px; height: 24px; background: radial-gradient(circle at 1px 1px, #888 .6px, transparent .9px) 0 0 / 5px 5px; }
.bigt { font: bold 22px/30px "DejaVu Serif", serif; color: #1a1a14; text-shadow: 1px 1px 1px #887; }
.frameA text { font: bold 12px "DejaVu Sans", sans-serif; fill: #000; }

.combo { height: 25px; border: 1px solid #a8a8a8; border-radius: 3px; background: linear-gradient(#fcfcfc, #dedede); display: flex; align-items: center; padding: 0 4px 0 3px; flex: none; }
.chev { width: 12px; height: 12px; margin-left: auto; }
.c1 { width: 112px; margin-left: 2px; margin-right: 1px; }
.c2 { width: 127px; margin-left: 1px; margin-right: 1px; }
.c3 { width: 90px; margin-left: 1px; }
.c4 { width: 136px; margin-left: 2px; }
.linebox { width: 87px; height: 19px; background: linear-gradient(#777, #777) 0 9px / 100% 1.500px no-repeat #fff; }
.sw { width: 43px; height: 19px; border: 1px solid #4a4f55; }
.blue { background: #3465a4; }
.light { background: #729fcf; }
.br { margin-left: 6px; }
.spin { width: 69px; height: 25px; margin-left: 2px; border: 1px solid #a8a8a8; border-radius: 3px 0 0 3px; background: #fdfdfd; line-height: 23px; font-size: 15px; padding-left: 1px; }
.spinbtn { width: 17px; height: 25px; margin-right: 1px; border: 1px solid #b4b4b4; border-left-color: #ddd; border-radius: 0 3px 3px 0; display: flex; flex-direction: column; align-items: center; justify-content: space-around; background: #f4f4f4; }
.spinbtn svg { width: 8px; height: 8px; }
.up { transform: scaleY(-1); }

.work { height: 808px; flex: none; display: flex; border-top: 1px solid #a8a8a8; }
.slides { width: 290px; border-bottom: 1px solid #a8a8a8; height: 807px; }
.slides h2 { margin: 0; height: 34px; padding: 0 9px 0 3px; display: flex; align-items: center; justify-content: space-between; font-size: 14px; font-weight: 600; letter-spacing: .1px; color: #333; }
.listwrap { display: flex; margin-left: 2px; width: 284px; height: 769px; border-top: 1px solid #a8a8a8; border-left: 1px solid #a8a8a8; }
.list { width: 269px; background: #fff; overflow: hidden; padding: 8px 0 0 8px; }
.list article { position: relative; width: 253px; height: 176px; margin-bottom: 11px; padding: 4px 0 0 25px; border: 1px solid transparent; }
.list article.sel { background: #a4c3e3; border-color: #5a7ea6; }
.num { position: absolute; left: 0; width: 20px; top: 2px; text-align: right; font: 500 16.500px/20px "Noto Sans", sans-serif; color: #868686; }
.sel .num { color: #555; }
.star { position: absolute; left: 3px; top: 142px; }
.thumb { width: 222px; height: 167px; background: #fff; outline: 1px solid #8a8a8a; box-shadow: 1px 2px 3px #888; }
.tl { fill: none; stroke: #a4dada; stroke-width: 1.600; }
.thin { stroke-width: 1; stroke: #6cc0c0; }
.bl { fill: #129a9a; }
.cover { font-family: "DejaVu Serif", "Noto Sans CJK SC", serif; font-weight: bold; fill: #003399; filter: drop-shadow(.9px .9px 0 #000028); }
.cover.cjk { fill: #00007a; }
.tt { font: bold 13.500px "Noto Sans CJK SC", sans-serif; fill: #000099; }
.slate { fill: #48697f; }
.bd { font: bold 7px "Liberation Sans", "Noto Sans CJK SC", sans-serif; fill: #111; }
.navy { fill: #000099; }
.mid { font-family: "Noto Sans CJK TC", sans-serif; }
.ft { font: 5.600px "Liberation Sans", "Noto Sans CJK SC", sans-serif; fill: #000; }
.tiny { font-size: 4.300px; }
.vs { width: 13px; background: #d6d6d6; }
.vs i, .hs i { display: block; background: #9a9c9e; border-radius: 4px; }
.vs i { width: 7px; margin-left: 3px; }
.th1 { height: 168px; margin-top: 4px; }
.th2 { height: 392px; margin-top: 363px; }

.split { width: 6px; height: 807px; border: 1px solid #a8a8a8; border-top: 0; display: flex; align-items: center; background: #f8f8f8; }
.split i { width: 3px; height: 32px; background: repeating-linear-gradient(#888 0 1.500px, transparent 1.500px 4px); }
.split.r { width: 5px; border-right-color: #b4b4b4; }

.editor { width: 1009px; display: flex; flex-direction: column; }
.tabs { height: 37px; display: flex; align-items: flex-end; gap: 1px; padding: 0 0 2px 8px; }
.tabs span { height: 28px; border: 1px solid #a6a6a6; border-bottom: 0; border-radius: 3px 3px 0 0; background: linear-gradient(#dedede, #cacaca); text-align: center; line-height: 24px; width: 63px; font-size: 13.700px; white-space: nowrap; }
.tabs span:nth-child(3) { width: 55px; }
.tabs span:nth-child(4) { width: 72px; }
.tabs span:nth-child(5) { width: 94px; }
.tabs .active { height: 33px; width: 63px; line-height: 28px; background: #fff; border-top: 3px solid #4a90e0; }
.viewrow { height: 758px; display: flex; overflow: hidden; }
.canvas { width: 995px; padding-left: 16px; overflow: hidden; }
.page { margin-top: -322px; background: #fff; box-shadow: 0 2px 5px 1px #666; }
.big { font: bold 32px "Liberation Sans", "Noto Sans CJK SC", sans-serif; fill: #000099; }
.foot { font: 24px "Liberation Sans", "Noto Sans CJK SC", sans-serif; fill: #000; }
.hs { width: 994px; height: 13px; margin-left: 1px; background: #d6d6d6; padding: 3px 0 0 329px; }
.hs i { width: 337px; height: 7px; }

.sidebar { width: 370px; height: 807px; display: flex; border-bottom: 1px solid #a8a8a8; padding: 3px 0 2px 3px; }
.deck { width: 327px; border: 1px solid #dcdcdc; }
.deck h3 { margin: 0; height: 27px; padding: 0 7px 0 10px; display: flex; align-items: center; justify-content: space-between; color: #000; font-size: 14px; font-weight: 600; letter-spacing: -.05px; }
.deck h3 svg { margin-top: 5px; color: #444; }
.deck h4 { margin: 0; height: 25px; display: flex; align-items: center; padding: 2px 0 0 5px; gap: 5px; font-size: 14px; font-weight: 600; letter-spacing: -.05px; color: #333; background: linear-gradient(#dcdcdc, #ededed); }
.deck h4 i { width: 9px; height: 9px; margin-top: -2px; border: 1px solid #5a6a80; font: bold 9px/6px "DejaVu Sans", sans-serif; text-align: center; color: #333; }
.layouts { display: grid; grid-template-columns: repeat(4, 81px); grid-auto-rows: 66px; margin-left: -1px; }
.layouts b { display: flex; align-items: center; justify-content: center; border: 1px solid transparent; }
.layouts .cur { border-color: #000; }
.layouts svg { width: 61px; height: 47px; }
.layouts .f { x: .5px; y: .5px; width: 60px; height: 46px; fill: #fff; stroke: url(#frame); }
.layouts .t { fill: #fff; stroke: #b4bcc8; }
.layouts .k { stroke: #3474a8; stroke-width: 3; }
.layouts .n { stroke: #3474a8; stroke-width: 2; }
.layouts .o { fill: #fff; stroke: #b4b4b4; }
.deckbar { width: 40px; display: flex; flex-direction: column; align-items: center; gap: 3px; }
.deckbar b { width: 32px; height: 32px; display: flex; align-items: center; justify-content: center; border: 1px solid transparent; border-radius: 3px; }
.deckbar .cfg { height: 36px; border-bottom-color: #d8d8d8; border-radius: 0; }
.deckbar .on { border-color: #b8b8b8; background: #e9e9e9; }

.status { height: 25px; border-top: 1px solid #a8a8a8; display: flex; align-items: center; font: 12px/18px "Noto Sans", sans-serif; padding-left: 542px; white-space: nowrap; }
.status div { display: flex; align-items: center; height: 19px; border-left: 1px solid #b0b0b0; padding-top: 3px; }
.status svg { margin-top: -3px; }
.status .zoom svg { margin-top: -1px; }
.pos { width: 203px; padding-left: 10px; gap: 6px; letter-spacing: .55px; }
.status .size { width: 211px; border: 0; padding-left: 12px; gap: 6px; letter-spacing: .5px; }
.mod { width: 23px; padding-left: 6px; }
.gap { width: 30px; }
.cnt { width: 88px; padding-left: 9px; letter-spacing: .1px; }
.tpl { width: 388px; padding-left: 9px; }
.zoom { width: 144px; padding-left: 10px; }
.pct { padding-left: 8px; }
```
